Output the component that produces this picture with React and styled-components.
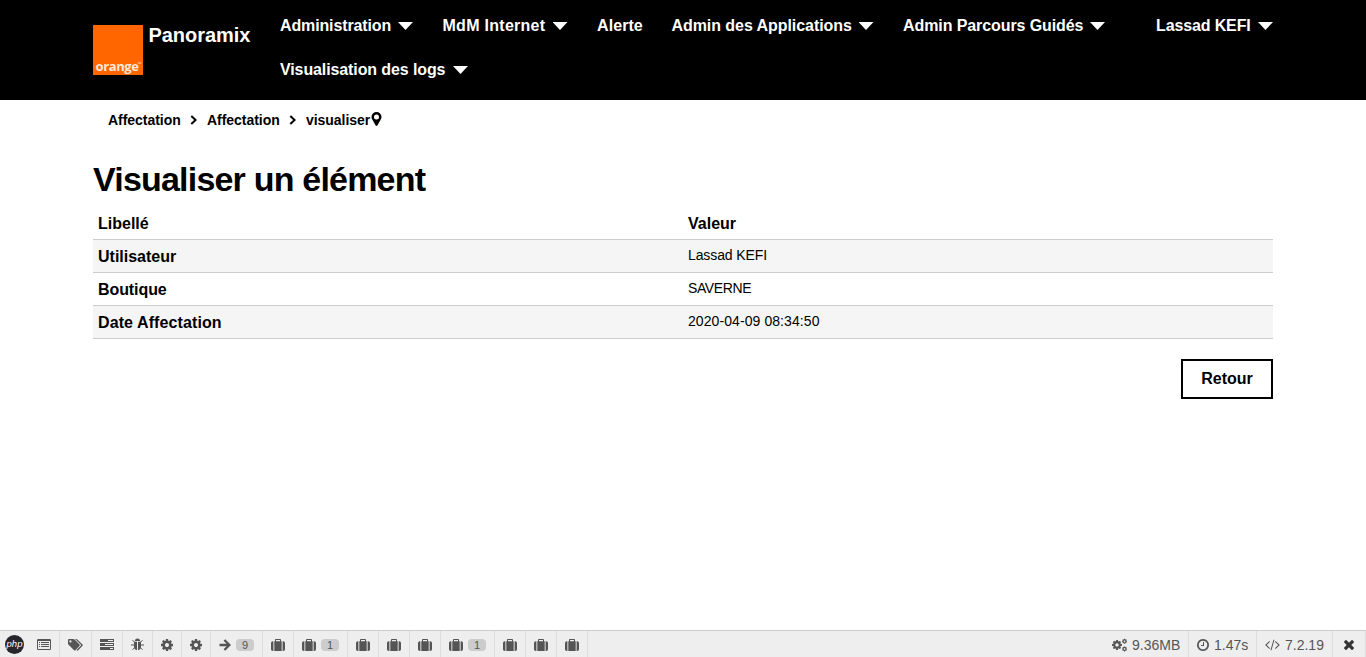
import React from "react";
import styled, { createGlobalStyle } from "styled-components";

const GlobalStyle = createGlobalStyle`
  * { box-sizing: border-box; }
  body {
    margin: 0;
    background: #fff;
    color: #000;
    font-family: "Liberation Sans", Arial, Helvetica, sans-serif;
    overflow: hidden;
  }
`;

const Page = styled.div`
  height: 657px;
  display: flex;
  flex-direction: column;
`;

const Header = styled.header`
  height: 100px;
  background: #000;
  color: #fff;
  padding: 0 93px;
  display: flex;
`;

const Brand = styled.div`
  display: flex;
  gap: 5.5px;
  padding-top: 25px;
  width: 172px;
  flex: none;
`;

const Logo = styled.div`
  width: 50px;
  height: 50px;
  background: #ff6600;
  display: flex;
  align-items: flex-end;
  justify-content: center;
  font: bold 13px/14px "Open Sans", sans-serif;
  letter-spacing: -0.4px;
  padding: 0 0 2px 1px;
  color: #ffe9d6;
  white-space: nowrap;
`;

const Trademark = styled.span`
  font-size: 5px;
  letter-spacing: 0;
  line-height: 5px;
  align-self: flex-end;
  margin: 0 0 6px -1px;
`;

const BrandName = styled.span`
  font-size: 20px;
  line-height: 20px;
  font-weight: bold;
  letter-spacing: -0.05px;
`;

const Nav = styled.nav`
  flex: 1;
  display: flex;
  flex-wrap: wrap;
  align-content: flex-start;
  padding-top: 4px;
`;

const NavItem = styled.a`
  height: 44px;
  display: flex;
  align-items: center;
  padding: 0 14.5px 0 15px;
  gap: 7px;
`;

const NavLabel = styled.span`
  width: ${(p) => p.$width}px;
  font-size: 16px;
  line-height: 20px;
  font-weight: bold;
  white-space: nowrap;
  letter-spacing: ${(p) => p.$track || 0}px;
`;

const UserItem = styled(NavItem)`
  margin-top: 4px;
  padding: 0;
  flex: none;
`;

const Caret = styled.i`
  width: 15px;
  height: 8px;
  background: #fff;
  clip-path: polygon(0 0, 100% 0, 50% 100%);
`;

const Main = styled.main`
  flex: 1;
  padding: 0 93px;
`;

const Breadcrumb = styled.div`
  display: flex;
  align-items: center;
  height: 40px;
  padding-left: 15px;
  font-size: 14px;
  font-weight: bold;
  letter-spacing: -0.04px;
`;

const Crumb = styled.span`
  width: ${(p) => p.$width}px;
  white-space: nowrap;
`;

const Chevron = styled.svg`
  width: 7px;
  height: 10px;
  margin: 0 10px 0 9px;
`;

const Pin = styled.svg`
  width: 11px;
  height: 14px;
  margin: -3px 0 0 2px;
`;

const Title = styled.h1`
  margin: 18px 0 9px;
  font-size: 34px;
  line-height: 42px;
  letter-spacing: -0.8px;
`;

const Table = styled.div`
  display: grid;
`;

const Row = styled.div`
  display: grid;
  grid-template-columns: 590px 1fr;
  height: ${(p) => (p.$head ? 31 : 33)}px;
  padding: ${(p) => (p.$head ? 5 : 7)}px 5px 0;
  line-height: 20px;
  background: ${(p) => (p.$striped ? "#f5f5f5" : "#fff")};
  border-bottom: 1px solid #ccc;
`;

const Label = styled.b`
  font-size: 16px;
  letter-spacing: ${(p) => p.$track || 0}px;
`;

const Value = styled.span`
  font-size: 14px;
  line-height: 16px;
  letter-spacing: ${(p) => p.$track || 0}px;
`;

const Actions = styled.div`
  display: flex;
  justify-content: flex-end;
  padding-top: 20px;
`;

const Button = styled.button`
  width: 92px;
  height: 40px;
  padding: 0;
  border: 2px solid #000;
  background: #fff;
  color: #000;
  font: bold 16px "Liberation Sans", Arial, sans-serif;
`;

const DebugBar = styled.footer`
  height: 27px;
  border-top: 1px solid #ccc;
  background: #eee;
  color: #555;
  display: flex;
`;

const Tab = styled.div`
  width: ${(p) => p.$width}px;
  padding: 1px 0 0 ${(p) => p.$pad ?? 8}px;
  border-right: ${(p) => (p.$plain ? 0 : 1)}px solid #ddd;
  display: flex;
  align-items: center;
  gap: 5px;
  font-size: 14px;
  white-space: nowrap;
`;

const Spacer = styled.div`
  flex: 1;
`;

const Badge = styled.span`
  width: 18px;
  height: 12px;
  border-radius: 4px;
  background: #ccc;
  font-size: 11px;
  line-height: 13px;
  text-align: center;
`;

const Glyph = styled.svg`
  width: ${(p) => p.$w}px;
  height: ${(p) => p.$h}px;
  fill: ${(p) => p.$color || "#555"};
  flex: none;
`;

const PhpMark = styled.div`
  width: 19px;
  height: 19px;
  margin-top: -1px;
  border-radius: 50%;
  background: #27262b;
  color: #fff;
  font: italic 9.5px/17px "Liberation Sans", sans-serif;
  text-align: center;
`;

const cogPath =
  "M1024 640q0-106-75-181t-181-75-181 75-75 181 75 181 181 75 181-75 75-181zm512-109v222q0 12-8 23t-20 13l-185 28q-19 54-39 91 35 50 107 138 10 12 10 25t-9 23q-27 37-99 108t-94 71q-12 0-26-9l-138-108q-44 23-91 38-16 136-29 186-7 28-36 28h-222q-14 0-24.5-8.5t-11.5-21.5l-28-184q-49-16-90-37l-141 107q-10 9-25 9-14 0-25-11-126-114-165-168-7-10-7-23 0-12 8-23 15-21 51-66.5t54-70.5q-27-50-41-99l-183-27q-13-2-21-12.5t-8-23.5v-222q0-12 8-23t19-13l186-28q14-46 39-92-40-57-107-138-10-12-10-24 0-10 9-23 26-36 98.5-107.5t94.5-71.5q13 0 26 10l138 107q44-23 91-38 16-136 29-186 7-28 36-28h222q14 0 24.5 8.5t11.5 21.5l28 184q49 16 90 37l142-107q9-9 24-9 13 0 25 10 129 119 165 170 7 8 7 22 0 12-8 23-15 21-51 66.5t-54 70.5q26 50 41 98l183 28q13 2 21 12.5t8 23.5z";

const Cog = () => (
  <Glyph $w={12} $h={12} viewBox="0 -128 1536 1536">
    <path d={cogPath} />
  </Glyph>
);

const Cogs = () => (
  <Glyph $w={15} $h={14} viewBox="0 0 15 14">
    <path transform="translate(0 2.8) scale(.0065)" d={cogPath} />
    <path transform="translate(10 1.2) scale(.0033)" d={cogPath} />
    <path transform="translate(10 8.8) scale(.0033)" d={cogPath} />
  </Glyph>
);

const ListAlt = () => (
  <Glyph $w={14} $h={11} viewBox="0 0 14 11">
    <path
      fillRule="evenodd"
      d="M1.2 0h11.6Q14 0 14 1.2v8.6Q14 11 12.8 11H1.2Q0 11 0 9.8V1.2Q0 0 1.2 0zM1 2V10h12V2z"
    />
    <path d="M2 3h1v1H2zM4 3h8v1H4zM2 5h1v1H2zM4 5h8v1H4zM2 7h1v1H2zM4 7h8v1H4z" />
  </Glyph>
);

const Tags = () => (
  <Glyph $w={15} $h={12} viewBox="0 0 15 12">
    <path
      fillRule="evenodd"
      d="M1 0h4.2q.8 0 1.6.7l4.8 4.8q.6.6 0 1.3L7.5 11.3q-.7.6-1.4 0L.8 6Q0 5.2 0 4.4V1q0-1 1-1zM2.4 1.3a1.15 1.15 0 1 0 0 2.3 1.15 1.15 0 0 0 0-2.3z"
    />
    <path d="M7 0h1q.9 0 1.6.7l4.9 4.8q.6.6 0 1.3l-4.2 4.5q-.6.6-1.3.2l-.4-.4 4.1-4.3q.6-.6 0-1.3z" />
  </Glyph>
);

const Tasks = () => (
  <Glyph $w={14} $h={11} viewBox="0 0 14 11">
    <path
      fillRule="evenodd"
      d="M0 0h14v3H0zM8 1v1h5V1zM0 4h14v3H0zM5 5v1h8V5zM0 8h14v3H0zM10 9v1h3V9z"
    />
  </Glyph>
);

const Bug = () => (
  <Glyph $w={13} $h={13} viewBox="0 0 13 13">
    <path d="M3.9 3a2.6 2.6 0 0 1 5.2 0zM3 3.700h3v8.500Q3 11.700 3 8.500zM7 3.700h3v4.800q0 3.200-3 3.700z" />
    <path
      d="M1.5 2.2L3.6 4.3M11.5 2.2L9.4 4.3M0 7h3M10 7h3M1.6 11.7l2.2-2.3M11.4 11.700L9.2 9.400"
      fill="none"
      stroke="#555"
      strokeWidth="1"
    />
  </Glyph>
);

const Arrow = () => (
  <Glyph $w={12} $h={12} viewBox="0 0 12 12">
    <path
      d="M0.5 6h9.5M5.400 1l5 5-5 5"
      fill="none"
      stroke="#555"
      strokeWidth="2.3"
    />
  </Glyph>
);

const Suitcase = () => (
  <Glyph $w={14} $h={12} viewBox="0 0 14 12">
    <path
      fillRule="evenodd"
      d="M3.3 12V2.300H4V.8Q4 0 4.800 0h4.400Q10 0 10 .8v1.500h.7V12zM5 1v1.300h4V1z"
    />
    <path d="M2.4 2.300V12h-.6Q0 12 0 10.200V4.100Q0 2.300 1.800 2.300zM11.600 2.300h.6Q14 2.300 14 4.100v6.100Q14 12 12.200 12h-.6z" />
  </Glyph>
);

const Clock = () => (
  <Glyph $w={12} $h={12} viewBox="0 0 1536 1536">
    <path d="M896 416v448q0 14-9 23t-23 9h-320q-14 0-23-9t-9-23v-64q0-14 9-23t23-9h224v-352q0-14 9-23t23-9h64q14 0 23 9t9 23zm416 352q0-148-73-273t-198-198-273-73-273 73-198 198-73 273 73 273 198 198 273 73 273-73 198-198 73-273zm224 0q0 209-103 385.5t-279.5 279.5-385.5 103-385.5-103-279.5-279.5-103-385.5 103-385.5 279.5-279.5 385.5-103 385.5 103 279.5 279.5 103 385.5z" />
  </Glyph>
);

const Code = () => (
  <Glyph $w={15} $h={12} viewBox="-20 192 1840 1536">
    <path d="M553 1399l-50 50q-10 10-23 10t-23-10l-466-466q-10-10-10-23t10-23l466-466q10-10 23-10t23 10l50 50q10 10 10 23t-10 23l-393 393 393 393q10 10 10 23t-10 23zm591-1067l-373 1291q-4 13-15.500 19.500t-23.500 2.500l-62-17q-13-4-19.500-15.500t-2.500-24.500l373-1291q4-13 15.500-19.500t23.500-2.500l62 17q13 4 19.500 15.500t2.500 24.500zm657 651l-466 466q-10 10-23 10t-23-10l-50-50q-10-10-10-23t10-23l393-393-393-393q-10-10-10-23t10-23l50-50q10-10 23-10t23 10l466 466q10 10 10 23t-10 23z" />
  </Glyph>
);

const Close = () => (
  <Glyph $w={10} $h={10} $color="#333" viewBox="110 118 1188 1188">
    <path d="M1298 1074q0 40-28 68l-136 136q-28 28-68 28t-68-28l-294-294-294 294q-28 28-68 28t-68-28l-136-136q-28-28-28-68t28-68l294-294-294-294q-28-28-28-68t28-68l136-136q28-28 68-28t68 28l294 294 294-294q28-28 68-28t68 28l136 136q28 28 28 68t-28 68l-294 294 294 294q28 28 28 68z" />
  </Glyph>
);

const Separator = () => (
  <Chevron viewBox="0 0 7 10">
    <path d="M1.300 1l4.300 4-4.300 4" fill="none" stroke="#000" strokeWidth="2" />
  </Chevron>
);

const navItems = [
  { label: "Administration", width: 111, track: -0.13, menu: true },
  { label: "MdM Internet", width: 103, track: 0.28, menu: true },
  { label: "Alerte", width: 45, track: 0.08 },
  { label: "Admin des Applications", width: 180, track: -0.06, menu: true },
  { label: "Admin Parcours Guidés", width: 180, track: -0.09, menu: true },
  { label: "Visualisation des logs", width: 166, track: -0.11, menu: true },
];

const rows = [
  { label: "Utilisateur", value: "Lassad KEFI", valueTrack: -0.1 },
  { label: "Boutique", labelTrack: -0.08, value: "SAVERNE", valueTrack: -0.4 },
  {
    label: "Date Affectation",
    labelTrack: 0.1,
    value: "2020-04-09 08:34:50",
    valueTrack: 0.08,
  },
];

const tabs = [
  { width: 32, icon: <Tags /> },
  { width: 31, icon: <Tasks /> },
  { width: 30, icon: <Bug /> },
  { width: 29, icon: <Cog /> },
  { width: 29, icon: <Cog /> },
  { width: 52, icon: <Arrow />, count: 9 },
  { width: 31, icon: <Suitcase /> },
  { width: 54, icon: <Suitcase />, count: 1 },
  { width: 31, icon: <Suitcase /> },
  { width: 31, icon: <Suitcase /> },
  { width: 31, icon: <Suitcase /> },
  { width: 54, icon: <Suitcase />, count: 1 },
  { width: 31, icon: <Suitcase /> },
  { width: 31, icon: <Suitcase /> },
  { width: 31, icon: <Suitcase /> },
];

export default function App() {
  return (
    <Page>
      <GlobalStyle />
      <Header>
        <Brand>
          <Logo>
            orange<Trademark>™</Trademark>
          </Logo>
          <BrandName>Panoramix</BrandName>
        </Brand>
        <Nav>
          {navItems.map((item) => (
            <NavItem key={item.label}>
              <NavLabel $width={item.width} $track={item.track}>
                {item.label}
              </NavLabel>
              {item.menu && <Caret />}
            </NavItem>
          ))}
        </Nav>
        <UserItem>
          <NavLabel $width={95} $track={-0.13}>
            Lassad KEFI
          </NavLabel>
          <Caret />
        </UserItem>
      </Header>
      <Main>
        <Breadcrumb>
          <Crumb $width={73}>Affectation</Crumb>
          <Separator />
          <Crumb $width={73}>Affectation</Crumb>
          <Separator />
          <Crumb $width={63}>visualiser</Crumb>
          <Pin viewBox="0 0 11 14">
            <path
              fillRule="evenodd"
              d="M5.500 0a5 5 0 0 1 5 5q0 1-.5 2L6.500 13.300q-1 1.200-2 0L1 7Q.5 6 .5 5a5 5 0 0 1 5-5zm0 2.500a2.500 2.500 0 1 0 0 5 2.500 2.500 0 0 0 0-5z"
            />
          </Pin>
        </Breadcrumb>
        <Title>Visualiser un élément</Title>
        <Table>
          <Row $head>
            <Label>Libellé</Label>
            <Label>Valeur</Label>
          </Row>
          {rows.map((row, i) => (
            <Row key={row.label} $striped={i % 2 === 0}>
              <Label $track={row.labelTrack}>{row.label}</Label>
              <Value $track={row.valueTrack}>{row.value}</Value>
            </Row>
          ))}
        </Table>
        <Actions>
          <Button>Retour</Button>
        </Actions>
      </Main>
      <DebugBar>
        <Tab $width={29} $pad={5} $plain>
          <PhpMark>php</PhpMark>
        </Tab>
        <Tab $width={31}>
          <ListAlt />
        </Tab>
        {tabs.map((tab, i) => (
          <Tab key={i} $width={tab.width}>
            {tab.icon}
            {tab.count && <Badge>{tab.count}</Badge>}
          </Tab>
        ))}
        <Spacer />
        <Tab $width={85}>
          <Cogs />
          9.36MB
        </Tab>
        <Tab $width={68}>
          <Clock />
          1.47s
        </Tab>
        <Tab $width={76}>
          <Code />
          7.2.19
        </Tab>
        <Tab $width={33} $pad={11}>
          <Close />
        </Tab>
      </DebugBar>
    </Page>
  );
}
